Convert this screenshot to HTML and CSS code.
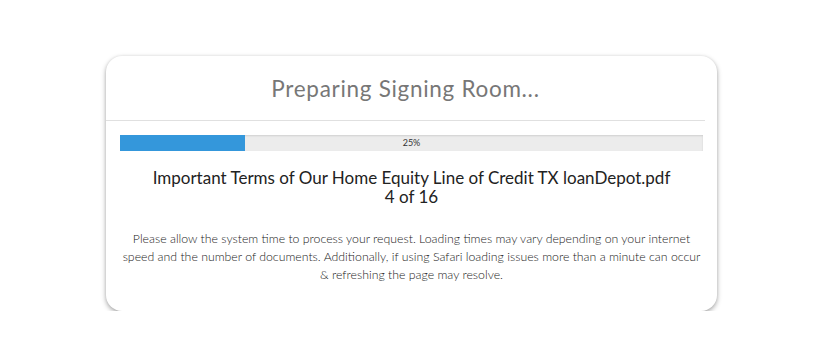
FILE: index.html
```html
<!DOCTYPE html>
<html lang="en">
<head>
    <meta charset="UTF-8">
    <title>Preparing Signing Room</title>
    <link rel="stylesheet" href="styles.css">
</head>
<body>
<div class="modal">
    <div class="modal-header">
        <h2>Preparing Signing Room...</h2>
    </div>
    <div class="modal-body">
        <div class="progress">
            <div class="progress-bar" style="width: 21.5%"></div>
            <span class="progress-label">25%</span>
        </div>
        <div class="doc-name">Important Terms of Our Home Equity Line of Credit TX loanDepot.pdf</div>
        <div class="doc-count">4 of 16</div>
        <p class="notice">Please allow the system time to process your request. Loading times may vary depending on your internet speed and the number of documents. Additionally, if using Safari loading issues more than a minute can occur &amp; refreshing the page may resolve.</p>
    </div>
</div>
</body>
</html>
```

FILE: styles.css
```css
body {
    margin: 0;
    padding: 56px 0 0 106px;
    font-family: Lato, "Open Sans", sans-serif;
    background: #fff;
}

.modal {
    width: 611px;
    height: 255px;
    box-sizing: border-box;
    background: #fff;
    border-radius: 16px;
    box-shadow: 0 2px 5px rgba(0, 0, 0, 0.35), 0 0 3px rgba(0, 0, 0, 0.06);
}

.modal-header {
    margin-right: 12px;
    border-bottom: 1px solid #e0e0e0;
    height: 64px;
    display: flex;
    align-items: center;
    justify-content: center;
}

.modal-header h2 {
    margin: 0;
    font-size: 22.5px;
    font-weight: 400;
    color: #777;
    letter-spacing: 0.7px;
}

.modal-body {
    padding: 14px 14px 0 14px;
    text-align: center;
}

.progress {
    position: relative;
    height: 16px;
    background: #ececec;
    box-shadow: inset 0 1px 2px rgba(0, 0, 0, 0.12);
}

.progress-bar {
    height: 100%;
    background: #3497db;
}

.progress-label {
    position: absolute;
    top: 0;
    left: 0;
    right: 0;
    line-height: 16px;
    font-size: 9px;
    color: #333;
}

.doc-name {
    margin-top: 17px;
    font-size: 17px;
    color: #222;
    line-height: 19px;
}

.doc-count {
    font-size: 17px;
    color: #222;
    line-height: 19px;
}

.notice {
    margin: 24px 0 0 0;
    font-size: 12.3px;
    font-weight: 300;
    line-height: 18px;
    color: #222;
}
```
